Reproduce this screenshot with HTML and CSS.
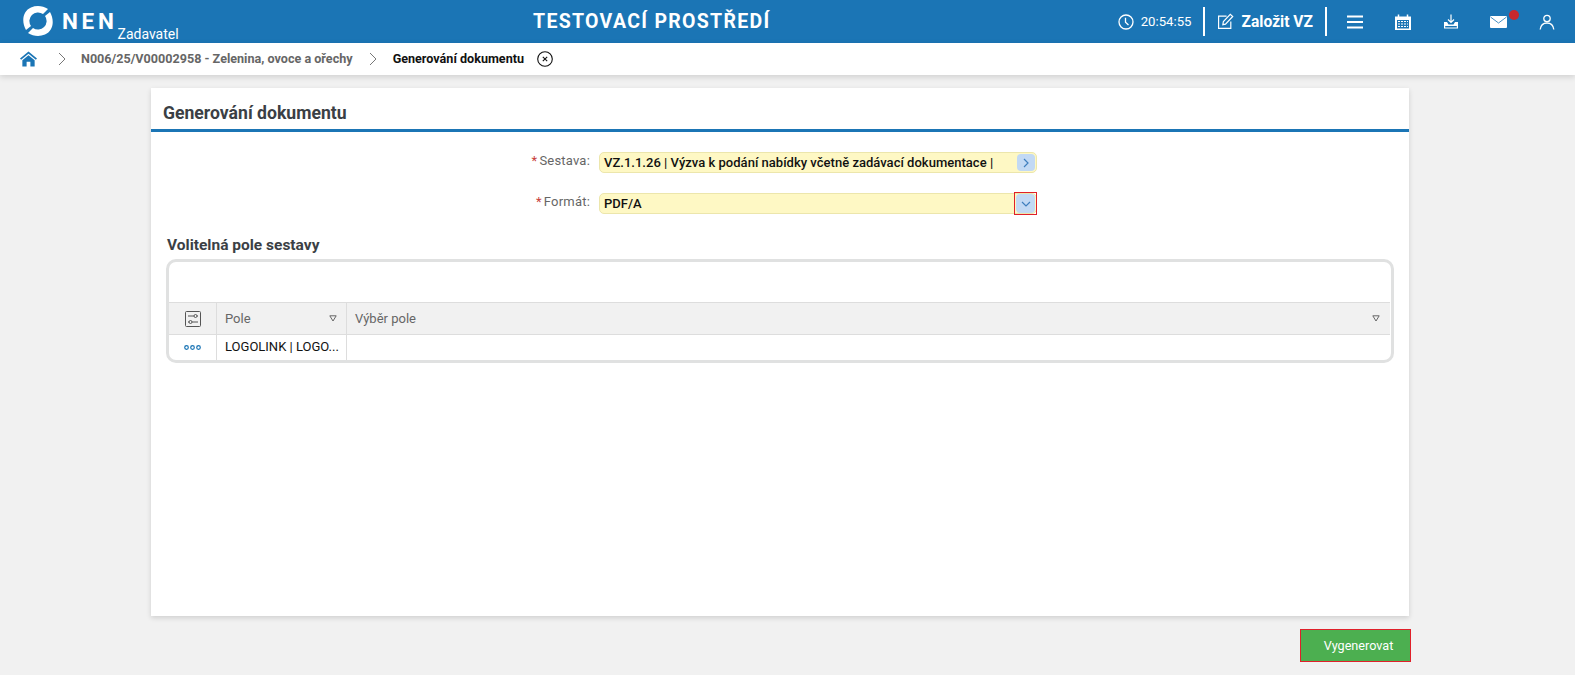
FILE: index.html
```html
<!DOCTYPE html>
<html lang="cs">
<head>
<meta charset="utf-8">
<title>Generování dokumentu</title>
<link rel="stylesheet" href="styles.css">
</head>
<body>
<header class="topbar">
  <div class="brand">
    <svg class="logo" viewBox="0 0 32 32" width="32" height="32">
      <path d="M4 25C-1 16 1 6 9 2.500 15 0 21 1 26 4L21 9A8.600 8.600 0 0 0 9 21Z" fill="#fff"/>
      <path d="M28 7C33 16 31 26 23 29.500 17 32 11 31 6 28L11 23A8.600 8.600 0 0 0 23 11Z" fill="#fff"/>
    </svg>
    <span class="brand-name">NEN</span>
    <span class="brand-role">Zadavatel</span>
  </div>
  <div class="env">TESTOVACÍ PROSTŘEDÍ</div>
  <div class="tools">
    <svg class="ic-clock" viewBox="0 0 16 16" width="16" height="16"><circle cx="8" cy="8" r="7" fill="none" stroke="#fff" stroke-width="1.300"/><path d="M7.500 3.800V8.300L10.500 11" fill="none" stroke="#fff" stroke-width="1.300"/></svg>
    <span class="clock">20:54:55</span>
    <span class="sep"></span>
    <svg class="ic-edit" viewBox="0 0 16 16" width="17" height="17"><path d="M9 3H1.500V14.500H13V8" fill="none" stroke="#fff" stroke-width="1.100"/><path d="M5.500 11 6 8 12.500 1.200 14.800 3.300 8 10.500Z" fill="none" stroke="#fff" stroke-width="1.100"/></svg>
    <span class="create">Založit VZ</span>
    <span class="sep"></span>
    <svg class="ic ic-menu" viewBox="0 0 16 14" width="16" height="14"><path d="M0 1.500H16M0 7H16M0 12.500H16" stroke="#fff" stroke-width="2"/></svg>
    <svg class="ic ic-cal" viewBox="0 0 16 16" width="16" height="16"><path d="M0 2.500H16V16H0Z" fill="#fff"/><path d="M3.500 0.500V4M12.500 0.500V4" stroke="#fff" stroke-width="1.500"/><path d="M2 6H14V14.500H2Z" fill="#1b75b5"/><path d="M3 7.500H13M3 10H13M3 12.500H13" stroke="#fff" stroke-width="1.200" stroke-dasharray="2 1"/></svg>
    <svg class="ic ic-down" viewBox="0 0 16 16" width="16" height="16"><path d="M8 0.500V8M5 5.500 8 8.500 11 5.500" fill="none" stroke="#fff" stroke-width="1.200"/><path d="M4 8H1V14.500H15V8H12L10.500 10.500H5.500Z" fill="#fff"/><path d="M2.200 12H13.800V13.500H2.200Z" fill="#1b75b5"/></svg>
    <span class="mail">
      <svg viewBox="0 0 17 12" width="17" height="12"><rect width="17" height="12" rx="1" fill="#fff"/><path d="M0.500 1 8.500 7 16.500 1" fill="none" stroke="#1b75b5" stroke-width="0.800"/></svg>
      <span class="badge"></span>
    </span>
    <svg class="ic ic-user" viewBox="0 0 16 16" width="16" height="16"><circle cx="8" cy="4.500" r="3.200" fill="none" stroke="#fff" stroke-width="1.300"/><path d="M1.200 15.500C1.800 11 4.500 9 8 9s6.200 2 6.800 6.500" fill="none" stroke="#fff" stroke-width="1.300"/></svg>
  </div>
</header>
<nav class="crumbs">
  <svg class="home" viewBox="0 0 18 16" width="17" height="16"><path d="M9 0 18 7.500 16.800 8.800 9 2.500 1.200 8.800 0 7.500Z" fill="#1b75b5"/><path d="M9 4 15.500 9.300V16H11V11H7V16H2.500V9.300Z" fill="#1b75b5"/></svg>
  <svg class="chev" viewBox="0 0 8 14" width="8" height="14"><path d="M1 1 7 7 1 13" fill="none" stroke="#777" stroke-width="1"/></svg>
  <span class="crumb">N006/25/V00002958 - Zelenina, ovoce a ořechy</span>
  <svg class="chev" viewBox="0 0 8 14" width="8" height="14"><path d="M1 1 7 7 1 13" fill="none" stroke="#777" stroke-width="1"/></svg>
  <span class="crumb-now">Generování dokumentu</span>
  <svg class="close" viewBox="0 0 16 16" width="16" height="16"><circle cx="8" cy="8" r="7.300" fill="none" stroke="#111" stroke-width="1.100"/><path d="M5.800 5.800 10.200 10.200M10.200 5.800 5.800 10.200" stroke="#111" stroke-width="1.100"/></svg>
</nav>
<main class="page">
  <section class="card">
    <h1 class="card-title">Generování dokumentu</h1>
    <div class="form">
      <div class="row">
        <label class="label"><span class="req">*</span>Sestava:</label>
        <div class="field">
          <span class="value">VZ.1.1.26 | Výzva k podání nabídky včetně zadávací dokumentace |</span>
          <span class="btn-arrow"><svg viewBox="0 0 8 10" width="8" height="10"><path d="M2 1 6 5 2 9" fill="none" stroke="#3f7fbe" stroke-width="1.200"/></svg></span>
        </div>
      </div>
      <div class="row">
        <label class="label"><span class="req">*</span>Formát:</label>
        <div class="field">
          <span class="value">PDF/A</span>
          <span class="flag"><span class="btn-arrow btn-wide"><svg viewBox="0 0 10 8" width="10" height="8"><path d="M1 2 5 6 9 2" fill="none" stroke="#3f7fbe" stroke-width="1.200"/></svg></span></span>
        </div>
      </div>
    </div>
    <h2 class="sub">Volitelná pole sestavy</h2>
    <div class="grid">
      <div class="grid-tools"></div>
      <div class="grid-head">
        <div class="c1"><svg viewBox="0 0 16 16" width="16" height="16"><rect x="0.500" y="0.500" width="15" height="15" rx="1" fill="none" stroke="#555"/><path d="M3 5H9M12 5H13M3 11H4M7 11H13" stroke="#555"/><circle cx="10.500" cy="5" r="1.500" fill="none" stroke="#555"/><circle cx="5.500" cy="11" r="1.500" fill="none" stroke="#555"/></svg></div>
        <div class="c2"><span>Pole</span><svg class="tri" viewBox="0 0 8 7" width="8" height="7"><path d="M0.800 0.800H7.200L4 6Z" fill="none" stroke="#666"/></svg></div>
        <div class="c3"><span>Výběr pole</span><svg class="tri" viewBox="0 0 8 7" width="8" height="7"><path d="M0.800 0.800H7.200L4 6Z" fill="none" stroke="#666"/></svg></div>
      </div>
      <div class="grid-row">
        <div class="c1"><svg viewBox="0 0 17 5" width="17" height="5"><g fill="none" stroke="#1b75b5" stroke-width="1.200"><circle cx="2.500" cy="2.500" r="1.800"/><circle cx="8.500" cy="2.500" r="1.800"/><circle cx="14.500" cy="2.500" r="1.800"/></g></svg></div>
        <div class="c2 cell">LOGOLINK | LOGO...</div>
        <div class="c3"></div>
      </div>
    </div>
  </section>
  <div class="actions"><button class="generate" type="button">Vygenerovat</button></div>
</main>
</body>
</html>
```

FILE: styles.css
```css
* { box-sizing: border-box; }
html, body { margin: 0; height: 100%; }
body { background: #f1f1f1; font-family: Roboto, "Liberation Sans", sans-serif; color: #333; overflow: hidden; }

.topbar { height: 43px; background: #1b75b5; color: #fff; display: flex; align-items: center; padding: 0 20px 0 22px; position: relative; }
.brand { display: flex; align-items: center; width: 520px; }
.logo { flex: none; margin-top: -1px; }
.brand-name { font-size: 22.500px; font-weight: 700; letter-spacing: 3.7px; margin-left: 8px; margin-top: -2px; }
.brand-role { font-size: 14px; margin-top: 24px; margin-left: 0; }
.env { font-size: 19.500px; font-weight: 700; letter-spacing: 1.300px; margin-left: -9px; }
.tools { margin-left: auto; display: flex; align-items: center; }
.ic-clock { margin-right: 7px; }
.clock { font-size: 13.200px; margin-right: -1px; }
.sep { width: 2px; height: 29px; background: #fff; margin: 0 12px; }
.ic-edit { margin-right: 8px; }
.create { font-size: 15.600px; font-weight: 700; }
.ic { flex: none; }
.ic-menu { margin-left: 8px; }
.ic-cal { margin-left: 32px; }
.ic-down { margin-left: 32px; }
.mail { position: relative; margin-left: 31px; display: flex; }
.badge { position: absolute; width: 10px; height: 10px; border-radius: 50%; background: #c8282d; top: -6px; right: -12px; }
.ic-user { margin-left: 32px; }

.crumbs { height: 32px; background: #fff; display: flex; align-items: center; padding: 0 0 1px 20px; font-size: 12.600px; box-shadow: 0 2px 6px rgba(0,0,0,.14); position: relative; }
.chev { margin-left: 21px; margin-right: 15px; }
.crumb { color: #666; font-weight: 700; }
.crumb + .chev { margin-left: 16px; margin-right: 16px; }
.crumb-now { color: #111; font-weight: 700; }
.close { margin-left: 13px; }

.page { padding: 13px 166px 0 151px; }
.card { height: 528px; background: #fff; box-shadow: 0 2px 5px rgba(0,0,0,.14); padding-top: 14px; }
.card-title { margin: 0; font-size: 17.600px; font-weight: 700; color: #3b3f45; padding: 0 12px; height: 30px; line-height: 22px; border-bottom: 3px solid #1b75b5; }
.form { padding: 20px 0 1px; }
.row { display: flex; align-items: center; height: 21px; margin-bottom: 20px; }
.label { width: 448px; text-align: right; padding-right: 9px; font-size: 13px; color: #666; letter-spacing: .2px; margin-top: -4px; }
.req { color: #c8403a; margin-right: 2px; }
.field { width: 438px; height: 21px; background: #fef8c4; border: 1px solid #ece6ac; border-radius: 5px; display: flex; align-items: center; justify-content: space-between; padding-left: 4px; position: relative; }
.value { font-size: 13px; font-weight: 500; color: #111; letter-spacing: .02px; }
.btn-arrow { width: 18px; height: 17px; margin-right: 1px; background: #c2d9f4; border-radius: 4px; display: flex; align-items: center; justify-content: center; }
.flag { position: absolute; right: -1px; top: -2px; width: 23px; height: 23px; border: 1px solid #e0202a; display: flex; align-items: center; justify-content: center; }
.btn-wide { width: 19px; height: 19px; margin-right: 0; }
.sub { margin: 0; padding-left: 16px; font-size: 15.500px; font-weight: 700; color: #3b3f45; height: 20px; line-height: 20px; }
.grid { margin: 4px 15px 0; height: 104px; border: 3px solid #e0e1e1; border-radius: 10px; background: #fff; font-size: 13px; }
.grid-tools { height: 40px; }
.grid-head, .grid-row { display: flex; }
.grid-head { height: 33px; margin-right: 1px; background: #f1f1f1; border-top: 1px solid #ddd; border-bottom: 1px solid #ddd; color: #666; }
.grid-row { height: 25px; color: #111; }
.c1 { width: 48px; border-right: 1px solid #ddd; display: flex; align-items: center; justify-content: center; flex: none; }
.c2 { width: 130px; border-right: 1px solid #ddd; display: flex; align-items: center; justify-content: space-between; padding: 0 9px 0 8px; flex: none; }
.c3 { flex: 1; display: flex; align-items: center; justify-content: space-between; padding: 0 10px 0 8px; }
.tri { flex: none; }
.cell { display: block; line-height: 24px; white-space: nowrap; }

.actions { display: flex; justify-content: flex-end; margin: 13px -2px 0 0; }
.generate { width: 111px; height: 33px; background: #4caf50; border: 1px solid #e0202a; color: #fff; font: 400 12.650px Roboto, "Liberation Sans", sans-serif; padding: 0 0 0 6px; }
```
